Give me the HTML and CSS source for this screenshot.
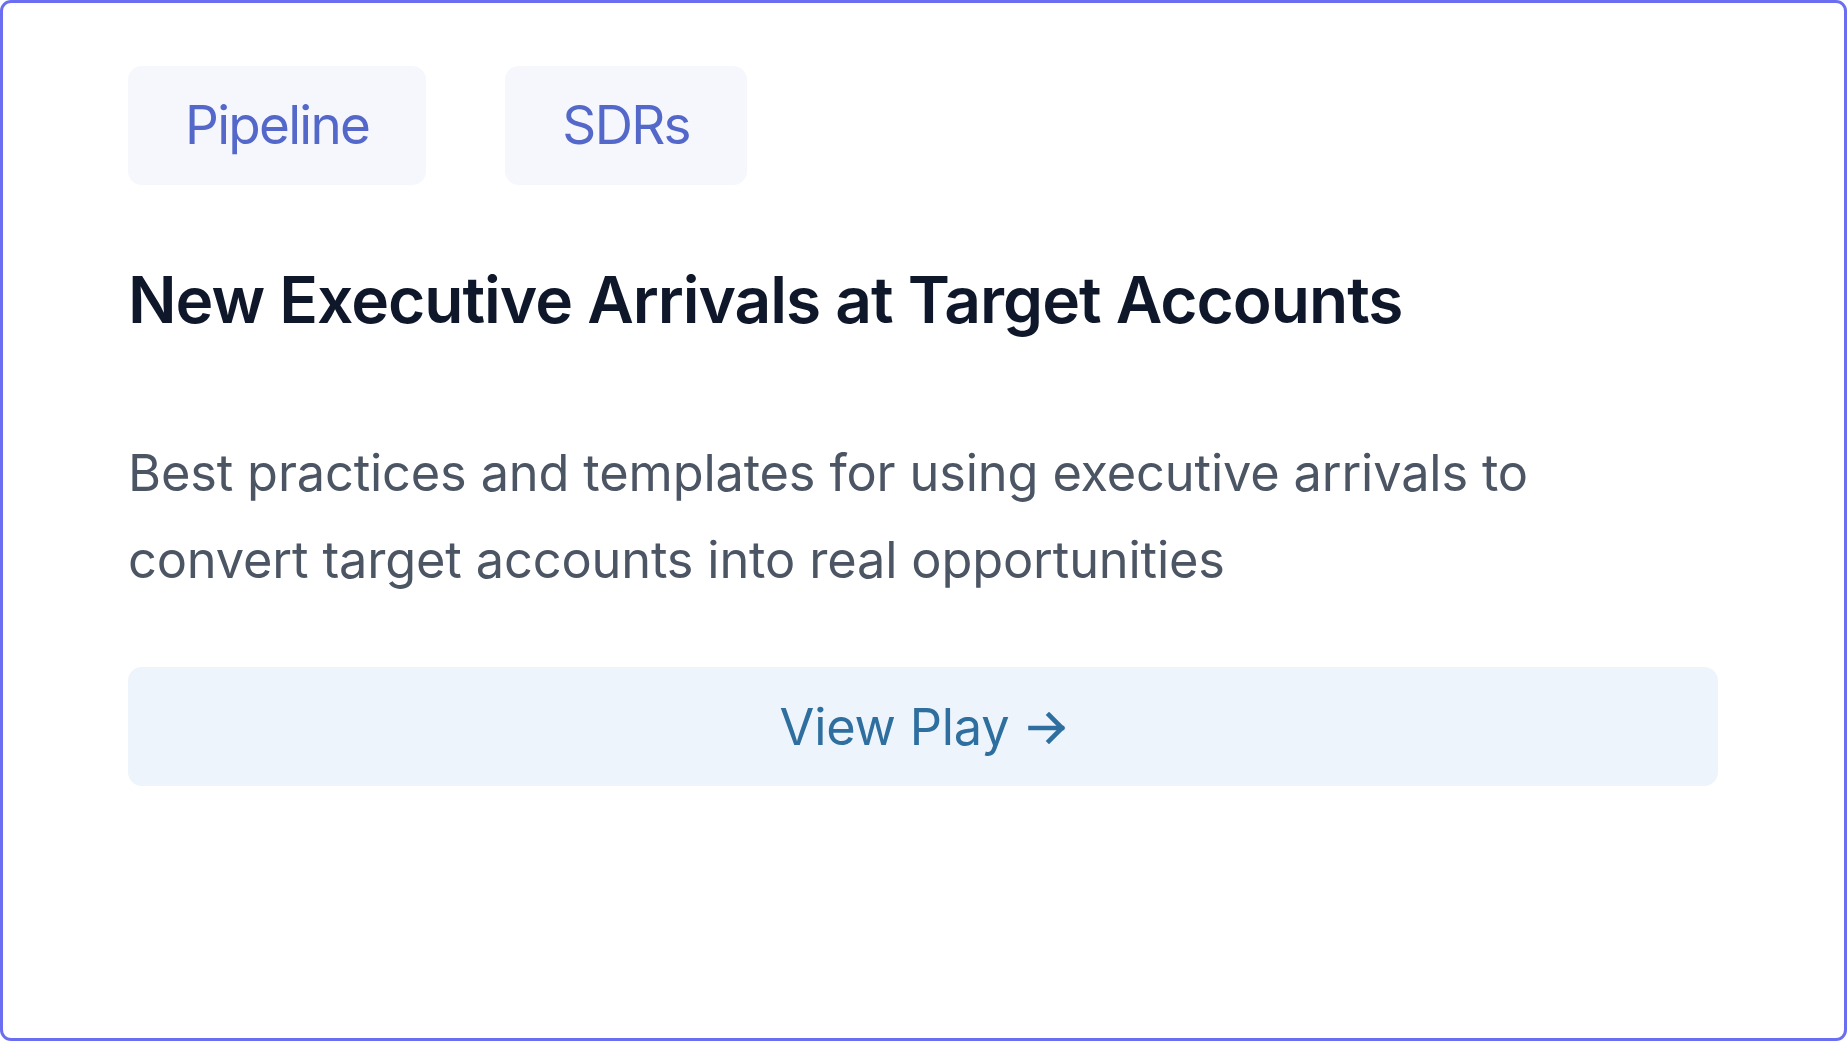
FILE: index.html
```html
<!DOCTYPE html>
<html lang="en">
<head>
<meta charset="utf-8">
<title>Play card</title>
<link rel="stylesheet" href="styles.css">
</head>
<body>
<article class="card">
  <div class="tags">
    <span class="tag">Pipeline</span>
    <span class="tag">SDRs</span>
  </div>
  <h2 class="title">New Executive Arrivals at Target Accounts</h2>
  <p class="desc">Best practices and templates for using executive arrivals to convert target accounts into real opportunities</p>
  <a class="btn" href="#">
    <span>View Play</span>
    <svg class="arrow" width="38" height="32" viewBox="0 0 38 32" fill="none" stroke="currentColor" stroke-width="4.6" stroke-linecap="square" stroke-linejoin="miter">
      <path d="M2.5 16H34"/>
      <path d="M21 3L34 16L21 29"/>
    </svg>
  </a>
</article>
</body>
</html>
```

FILE: styles.css
```css
* { box-sizing: border-box; }

html, body {
  margin: 0;
  padding: 0;
  background: #ffffff;
}

body {
  font-family: Inter, "Noto Sans", "Liberation Sans", sans-serif;
}

.card {
  width: 1847px;
  height: 1041px;
  border: 3px solid #6b6ef0;
  border-radius: 11px;
  padding: 63px 126px 0 125px;
  display: flex;
  flex-direction: column;
  background: #ffffff;
}

.tags {
  display: flex;
  gap: 79px;
}

.tag {
  display: inline-flex;
  align-items: center;
  justify-content: center;
  height: 119px;
  padding: 0 57px;
  background: #f5f7fd;
  border-radius: 14px;
  color: #5468ca;
  font-size: 53px;
  font-weight: 400;
  letter-spacing: -1.7px;
  line-height: 1;
}

.title {
  margin: 73px 0 0;
  font-size: 64px;
  line-height: 83px;
  font-weight: 600;
  letter-spacing: -1px;
  color: #0f172a;
}

.desc {
  margin: 88px 0 0;
  font-size: 50.5px;
  line-height: 87px;
  letter-spacing: -0.15px;
  color: #4b5563;
  max-width: 1440px;
}

.btn {
  margin-top: 64px;
  height: 119px;
  display: flex;
  align-items: center;
  justify-content: center;
  gap: 19px;
  background: #edf4fb;
  border-radius: 14px;
  color: #2f6f9f;
  font-size: 50.5px;
  letter-spacing: -0.2px;
  text-decoration: none;
}

.arrow {
  display: block;
  margin-top: 2px;
}
```
